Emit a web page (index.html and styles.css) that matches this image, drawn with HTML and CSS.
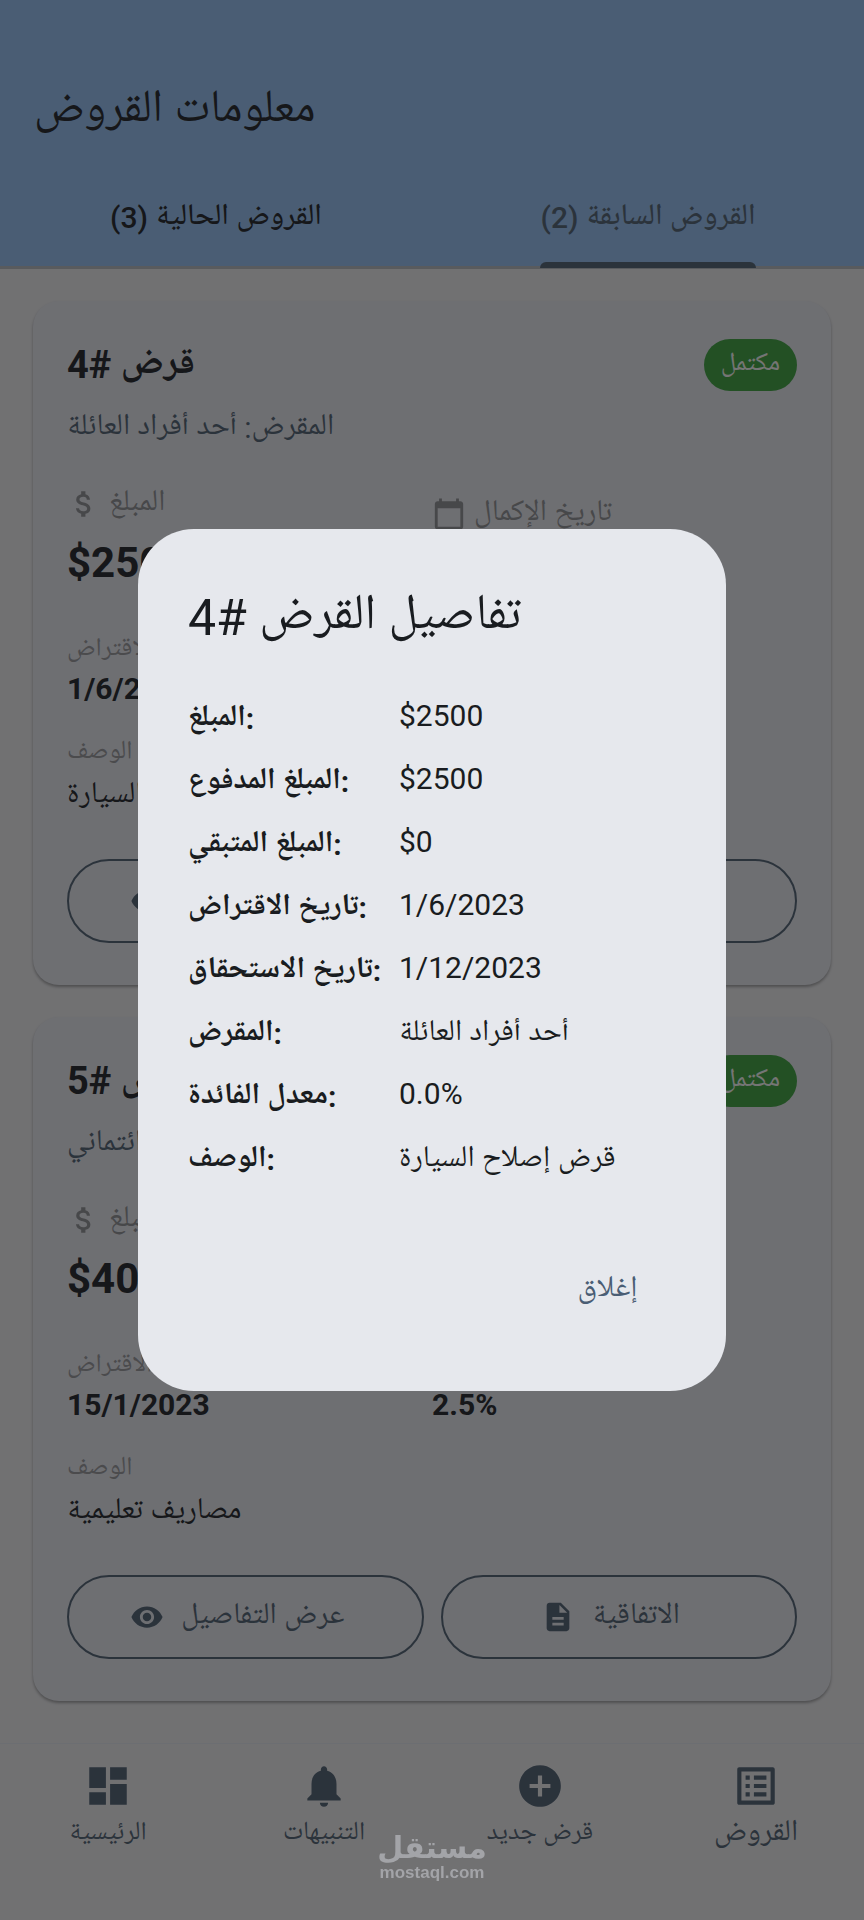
FILE: index.html
```html
<!DOCTYPE html>
<html lang="ar" dir="ltr">
<head>
<meta charset="utf-8">
<meta name="viewport" content="width=device-width, initial-scale=1">
<title>معلومات القروض</title>
<link rel="stylesheet" href="styles.css">
</head>
<body>
<svg class="sprite" aria-hidden="true">
  <symbol id="money" viewBox="0 0 24 24"><path d="M11.8 10.9c-2.27-.59-3-1.2-3-2.15 0-1.09 1.01-1.85 2.7-1.85 1.78 0 2.44.85 2.5 2.1h2.21c-.07-1.72-1.12-3.3-3.21-3.81V3h-3v2.16c-1.94.42-3.5 1.68-3.5 3.61 0 2.31 1.91 3.46 4.7 4.13 2.5.6 3 1.48 3 2.41 0 .69-.49 1.79-2.7 1.79-2.06 0-2.87-.92-2.98-2.1h-2.2c.12 2.19 1.76 3.42 3.68 3.83V21h3v-2.15c1.95-.37 3.5-1.5 3.5-3.55 0-2.84-2.43-3.81-4.7-4.4z"/></symbol>
  <symbol id="calendar" viewBox="0 0 24 24"><path d="M20 3h-1V1h-2v2H7V1H5v2H4c-1.1 0-2 .9-2 2v16c0 1.1.9 2 2 2h16c1.1 0 2-.9 2-2V5c0-1.1-.9-2-2-2zm0 18H4V8h16v13z"/></symbol>
  <symbol id="eye" viewBox="0 0 24 24"><path d="M12 4.5C7 4.5 2.73 7.61 1 12c1.73 4.39 6 7.5 11 7.5s9.27-3.11 11-7.5c-1.73-4.39-6-7.5-11-7.5zM12 17c-2.76 0-5-2.24-5-5s2.24-5 5-5 5 2.24 5 5-2.24 5-5 5zm0-8c-1.66 0-3 1.34-3 3s1.34 3 3 3 3-1.34 3-3-1.34-3-3-3z"/></symbol>
  <symbol id="document" viewBox="0 0 24 24"><path d="M14 2H6c-1.1 0-1.99.9-1.99 2L4 20c0 1.1.89 2 1.99 2H18c1.1 0 2-.9 2-2V8l-6-6zm2 16H8v-2h8v2zm0-4H8v-2h8v2zm-3-5V3.5L18.5 9H13z"/></symbol>
  <symbol id="dashboard" viewBox="0 0 24 24"><path d="M3 13h8V3H3v10zm0 8h8v-6H3v6zm10 0h8V11h-8v10zm0-18v6h8V3h-8z"/></symbol>
  <symbol id="bell" viewBox="0 0 24 24"><path d="M12 22c1.1 0 2-.9 2-2h-4c0 1.1.89 2 2 2zm6-6v-5c0-3.07-1.64-5.64-4.5-6.32V4c0-.83-.67-1.5-1.5-1.5s-1.5.67-1.5 1.5v.68C7.63 5.36 6 7.92 6 11v5l-2 2v1h16v-1l-2-2z"/></symbol>
  <symbol id="add" viewBox="0 0 24 24"><path d="M12 2C6.48 2 2 6.48 2 12s4.48 10 10 10 10-4.48 10-10S17.52 2 12 2zm5 11h-4v4h-2v-4H7v-2h4V7h2v4h4v2z"/></symbol>
  <symbol id="list" viewBox="0 0 24 24"><path d="M19 5v14H5V5h14m1.1-2H3.9c-.5 0-.9.4-.9.9v16.2c0 .4.4.9.9.9h16.2c.4 0 .9-.5.9-.9V3.9c0-.5-.5-.9-.9-.9zM11 7h6v2h-6V7zm0 4h6v2h-6v-2zm0 4h6v2h-6zM7 7h2v2H7zm0 4h2v2H7zm0 4h2v2H7z"/></symbol>
</svg>

<header class="app-bar">
  <h1 class="app-title">معلومات القروض</h1>
  <div class="tabs" role="tablist">
    <button class="tab" type="button" role="tab" aria-selected="false">القروض الحالية (3)</button>
    <button class="tab tab-active" type="button" role="tab" aria-selected="true">القروض السابقة (2)</button>
  </div>
</header>

<main class="loans">
  <article class="card">
    <div class="card-head">
      <h2 class="card-title">قرض #4</h2>
      <span class="badge">مكتمل</span>
    </div>
    <p class="lender">المقرض: أحد أفراد العائلة</p>
    <div class="facts">
      <div>
        <div class="fact-label"><svg class="icon"><use href="#money"/></svg>المبلغ</div>
        <div class="amount">$2500</div>
      </div>
      <div class="fact-completed">
        <div class="fact-label"><svg class="icon"><use href="#calendar"/></svg>تاريخ الإكمال</div>
      </div>
    </div>
    <div class="facts facts-dates">
      <div>
        <div class="small-label">تاريخ الاقتراض</div>
        <div class="value">1/6/2023</div>
      </div>
    </div>
    <div class="description">
      <div class="small-label">الوصف</div>
      <p class="description-text">قرض إصلاح السيارة</p>
    </div>
    <div class="actions">
      <button class="outlined" type="button"><svg class="icon"><use href="#eye"/></svg>عرض التفاصيل</button>
      <button class="outlined" type="button"><svg class="icon"><use href="#document"/></svg>الاتفاقية</button>
    </div>
  </article>

  <article class="card">
    <div class="card-head">
      <h2 class="card-title">قرض #5</h2>
      <span class="badge">مكتمل</span>
    </div>
    <p class="lender">المقرض: اتحاد ائتماني</p>
    <div class="facts">
      <div>
        <div class="fact-label"><svg class="icon"><use href="#money"/></svg>المبلغ</div>
        <div class="amount">$4000</div>
      </div>
      <div class="fact-completed">
        <div class="fact-label"><svg class="icon"><use href="#calendar"/></svg>تاريخ الإكمال</div>
      </div>
    </div>
    <div class="facts facts-dates">
      <div>
        <div class="small-label">تاريخ الاقتراض</div>
        <div class="value">15/1/2023</div>
      </div>
      <div>
        <div class="small-label">معدل الفائدة</div>
        <div class="value">2.5%</div>
      </div>
    </div>
    <div class="description">
      <div class="small-label">الوصف</div>
      <p class="description-text">مصاريف تعليمية</p>
    </div>
    <div class="actions">
      <button class="outlined" type="button"><svg class="icon"><use href="#eye"/></svg>عرض التفاصيل</button>
      <button class="outlined" type="button"><svg class="icon"><use href="#document"/></svg>الاتفاقية</button>
    </div>
  </article>
</main>

<nav class="bottom-nav">
  <a class="nav-item" href="#home"><svg class="nav-icon"><use href="#dashboard"/></svg><span>الرئيسية</span></a>
  <a class="nav-item" href="#alerts"><svg class="nav-icon"><use href="#bell"/></svg><span>التنبيهات</span></a>
  <a class="nav-item" href="#new"><svg class="nav-icon"><use href="#add"/></svg><span>قرض جديد</span></a>
  <a class="nav-item nav-item-active" href="#loans" aria-current="page"><svg class="nav-icon"><use href="#list"/></svg><span>القروض</span></a>
</nav>

<div class="scrim">
  <section class="dialog" role="dialog" aria-modal="true" aria-labelledby="dialog-title">
    <h2 class="dialog-title" id="dialog-title">تفاصيل القرض #4</h2>
    <dl class="details">
      <dt>المبلغ:</dt><dd class="num">$2500</dd>
      <dt>المبلغ المدفوع:</dt><dd class="num">$2500</dd>
      <dt>المبلغ المتبقي:</dt><dd class="num">$0</dd>
      <dt>تاريخ الاقتراض:</dt><dd class="num">1/6/2023</dd>
      <dt>تاريخ الاستحقاق:</dt><dd class="num">1/12/2023</dd>
      <dt>المقرض:</dt><dd>أحد أفراد العائلة</dd>
      <dt>معدل الفائدة:</dt><dd class="num">0.0%</dd>
      <dt>الوصف:</dt><dd>قرض إصلاح السيارة</dd>
    </dl>
    <div class="dialog-actions"><button class="text-button" type="button">إغلاق</button></div>
  </section>
</div>

<div class="watermark"><span class="watermark-name">مستقل</span><span class="watermark-site">mostaql.com</span></div>
</body>
</html>
```
FILE: styles.css
```css
* { box-sizing: border-box; }

body {
  margin: 0;
  min-height: 100vh;
  display: flex;
  flex-direction: column;
  background: #f6f6f9;
  color: #303439;
  font-family: Roboto, "Noto Naskh Arabic UI", "Noto Naskh Arabic", "Noto Sans Arabic", sans-serif;
  font-size: 30px;
  line-height: 44px;
}

h1, h2, p, dl, dd { margin: 0; }

button {
  margin: 0;
  padding: 0;
  border: 0;
  background: none;
  color: inherit;
  font: inherit;
}

svg { fill: currentColor; flex: none; }
.sprite { position: absolute; width: 0; height: 0; }
.icon { width: 34px; height: 34px; }

.app-bar {
  background: #a1cafc;
  border-bottom: 3px solid #c3c7cc;
  padding-top: 77px;
}
.app-title {
  padding: 0 34px;
  font-size: 46px;
  font-weight: 400;
  line-height: 68px;
}
.tabs {
  display: grid;
  grid-template-columns: 1fr 1fr;
  justify-items: center;
  margin-top: 24px;
}
.tab {
  height: 97px;
  padding-bottom: 0;
  font-weight: 500;
}
.tab-active {
  color: #5f7082;
  position: relative;
}
.tab-active::after {
  content: "";
  position: absolute;
  left: 0;
  right: 0;
  bottom: -2px;
  height: 6px;
  border-radius: 6px 6px 0 0;
  background: #5f7082;
}

.loans {
  flex: 1;
  display: flex;
  flex-direction: column;
  gap: 32px;
  padding: 32px 33px;
}
.card {
  padding: 34px 34px 42px;
  border-radius: 26px;
  background: #eff1f9;
  box-shadow: 0 2px 3px rgba(0, 0, 0, .3);
}
.card-head {
  display: flex;
  justify-content: space-between;
  align-items: center;
}
.card-title {
  font-size: 38px;
  font-weight: 700;
  line-height: 60px;
}
.badge {
  padding: 0 17px;
  border-radius: 26px;
  background: #4caf50;
  color: #fff;
  font-size: 26px;
  line-height: 52px;
}
.lender { margin-top: 11px; color: #5f7082; }
.facts {
  display: grid;
  grid-template-columns: 1fr 1fr;
  margin-top: 34px;
}
.facts-dates { margin-top: 44px; }
.fact-completed { padding-top: 10px; }
.fact-label {
  display: flex;
  align-items: center;
  gap: 8px;
  color: #9c9da1;
  line-height: 40px;
}
.amount {
  margin-top: 14px;
  font-size: 42px;
  font-weight: 700;
  line-height: 50px;
}
.small-label {
  color: #a3a4a8;
  font-size: 26px;
  line-height: 36px;
}
.value {
  margin-top: 1px;
  font-weight: 700;
  line-height: 40px;
}
.description { margin-top: 26px; }
.description-text { margin-top: 3px; }
.actions {
  display: grid;
  grid-template-columns: 1fr 1fr;
  gap: 17px;
  margin-top: 41px;
}
.outlined {
  display: flex;
  align-items: center;
  justify-content: center;
  gap: 17px;
  height: 84px;
  padding: 0 50px 0 34px;
  border: 2px solid #5f7082;
  border-radius: 42px;
  color: #5f7082;
}

.bottom-nav {
  display: grid;
  grid-template-columns: repeat(4, 1fr);
  height: 177px;
  border-top: 1px solid #eceff8;
}
.nav-item {
  display: flex;
  flex-direction: column;
  align-items: center;
  gap: 1px;
  padding-top: 17px;
  color: #5f7082;
  font-size: 26px;
  text-decoration: none;
}
.nav-item-active { font-size: 30px; }
.nav-icon { width: 50px; height: 50px; }

.scrim {
  position: fixed;
  inset: 0;
  display: flex;
  align-items: center;
  justify-content: center;
  padding: 0 138px;
  background: rgba(0, 0, 0, .54);
}
.dialog {
  width: 100%;
  padding: 55px 50px 50px;
  border-radius: 56px;
  background: #e6e8ed;
  color: #191c20;
}
.dialog-title {
  font-size: 50px;
  font-weight: 400;
  line-height: 68px;
}
.details {
  display: grid;
  grid-template-columns: 200px 1fr;
  column-gap: 11px;
  margin-top: 34px;
  line-height: 60px;
}
.details dt,
.details dd { padding-top: 3px; }
.details dt { font-weight: 700; white-space: nowrap; }
.details .num { padding: 0 0 3px; }
.dialog-actions {
  display: flex;
  justify-content: flex-end;
  margin-top: 49px;
}
.text-button {
  height: 102px;
  padding: 0 38px;
  color: #4a5d74;
}

.watermark {
  position: fixed;
  left: 50%;
  bottom: 37px;
  transform: translateX(-50%);
  display: flex;
  flex-direction: column;
  align-items: center;
  color: #a3a4a8;
  font-family: "Liberation Sans", sans-serif;
  font-weight: 700;
}
.watermark-name {
  font-family: "DejaVu Sans", sans-serif;
  font-size: 30px;
  line-height: 30px;
}
.watermark-site { font-size: 17px; line-height: 20px; }
```
